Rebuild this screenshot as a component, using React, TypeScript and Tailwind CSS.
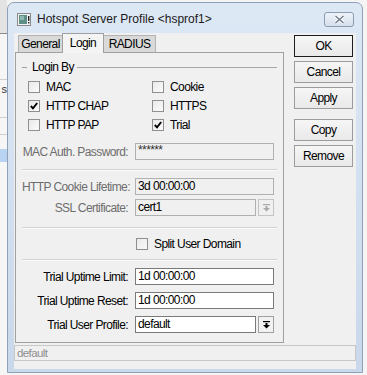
import React from "react";

function Check({ checked }: { checked?: boolean }) {
  return (
    <div className="w-[12px] h-[12px] shrink-0 border border-[#8e8f8f] bg-gradient-to-br from-[#e9e9e9] to-[#fbfbfb] flex items-center justify-center">
      {checked && (
        <svg width="8" height="8" viewBox="0 0 8 8">
          <path d="M0.8 4 L3 6.4 L7.2 1" stroke="#000" strokeWidth="1.9" fill="none" />
        </svg>
      )}
    </div>
  );
}

function Arrow({ disabled }: { disabled?: boolean }) {
  const c = disabled ? "#a9a9a9" : "#000";
  return (
    <svg width="7" height="8" viewBox="0 0 7 8">
      <rect x="0" y="0" width="7" height="1.2" fill={c} />
      <rect x="2.5" y="2" width="2" height="2" fill={c} />
      <polygon points="0,4 7,4 3.5,7.6" fill={c} />
    </svg>
  );
}

function Field({
  label,
  value,
  disabled,
  dropdown,
  small,
}: {
  label: string;
  value: string;
  disabled?: boolean;
  dropdown?: boolean;
  small?: boolean;
}) {
  return (
    <div className="flex items-center h-[17px]">
      <div
        className={
          "w-[106px] text-right whitespace-nowrap " +
          (disabled ? "text-[#6d6d6d]" : "text-black")
        }
      >
        {label}
      </div>
      <div className="ml-[7px] flex">
        <div
          className={
            "h-[17px] border pl-[2px] whitespace-nowrap overflow-hidden " +
            (dropdown ? "w-[121px] " : "w-[139px] ") +
            (disabled ? "border-[#b0b0b0] bg-[#f0f0f0] " : "border-[#7a7a7a] bg-white ") +
            (small ? "leading-[12px] text-[#333]" : "leading-[15px] text-black")
          }
        >
          {value}
        </div>
        {dropdown && (
          <div
            className={
              "ml-[2px] w-[16px] h-[17px] border flex items-center justify-center " +
              (disabled ? "border-[#c4c4c4] bg-[#f0f0f0]" : "border-[#a0a0a0] bg-[#f2f2f2]")
            }
          >
            <Arrow disabled={disabled} />
          </div>
        )}
      </div>
    </div>
  );
}

function Sep() {
  return (
    <div className="flex flex-col">
      <div className="h-[1px] bg-[#d2d2d2]" />
      <div className="h-[1px] bg-[#fbfbfb]" />
    </div>
  );
}

function Btn({ children, def }: { children: React.ReactNode; def?: boolean }) {
  return (
    <div
      className={
        "h-[22px] w-[59px] flex items-center justify-center border bg-gradient-to-b from-[#f6f6f6] to-[#e9e9e9] " +
        (def ? "border-[#1e1e1e]" : "border-[#9c9c9c]")
      }
    >
      {children}
    </div>
  );
}

function TitleIcon() {
  return (
    <svg width="14" height="13" viewBox="0 0 14 13">
      <rect x="0.5" y="0.5" width="13" height="12" fill="#f4f4f4" stroke="#8a8a8a" />
      <rect x="2" y="2" width="8" height="9" fill="#5f8f86" />
      <rect x="3" y="3" width="4" height="4" fill="#8fb8b0" />
      <rect x="11" y="3" width="1.4" height="5" fill="#222" />
      <rect x="11" y="9" width="1.4" height="1.4" fill="#222" />
    </svg>
  );
}

function LeftStrip() {
  return (
    <div className="w-[7px] shrink-0 flex flex-col overflow-hidden">
      <div className="h-[33px] shrink-0 bg-[#e3e3e3]" />
      <div className="h-[1px] shrink-0 bg-[#8a8a8a]" />
      <div className="h-[45px] shrink-0 bg-[#f6f6f6]" />
      <div className="h-[1px] shrink-0 bg-[#cfcfcf]" />
      <div className="h-[37px] shrink-0 bg-[#f6f6f6] flex justify-end pt-[2px] text-[#333] text-[11px] tracking-normal whitespace-nowrap leading-[14px]">
        s
      </div>
      <div className="h-[1px] shrink-0 bg-[#cfcfcf]" />
      <div className="h-[16px] shrink-0 bg-[#f6f6f6]" />
      <div className="h-[1px] shrink-0 bg-[#cfcfcf]" />
      <div className="h-[14px] shrink-0 bg-[#f6f6f6]" />
      <div className="h-[13px] shrink-0 bg-[#b9d3f2]" />
      <div className="flex-1 bg-[#f6f6f6]" />
    </div>
  );
}

export default function App() {
  return (
    <div className="w-[367px] h-[375px] overflow-hidden flex bg-[#f7f7f7] font-['Liberation_Sans',Arial,sans-serif] text-[12px] tracking-[-0.6px] text-black">
      <LeftStrip />
      <div className="w-[356px] shrink-0 pt-[2px] bg-[#f4f4f4]">
        <div className="w-[356px] h-[371px] rounded-t-[7px] border border-[#8fa1b8] bg-gradient-to-b from-[#dde8f5] to-[#c9d8ea] flex flex-col px-[6px] pb-[3px]">
          {/* title bar */}
          <div className="h-[30px] shrink-0 flex items-center pt-[2px]">
            <div className="ml-[3px]">
              <TitleIcon />
            </div>
            <div className="ml-[6px] text-[#1b1b1b] tracking-normal whitespace-nowrap">
              Hotspot Server Profile &lt;hsprof1&gt;
            </div>
            <div className="ml-auto mr-[2px] w-[30px] h-[15px] rounded-[3px] border border-[#8b9bb2] bg-gradient-to-b from-[#eef3f9] to-[#d5dfeb] flex items-center justify-center">
              <svg width="11" height="9" viewBox="0 0 11 9">
                <path d="M1.5 1 L9.5 8 M9.5 1 L1.5 8" stroke="#ffffff" strokeWidth="3.2" />
                <path d="M1.5 1 L9.5 8 M9.5 1 L1.5 8" stroke="#6f7c8c" strokeWidth="1.5" />
              </svg>
            </div>
          </div>
          {/* client */}
          <div className="flex-1 bg-[#f0f0f0] flex flex-col">
            <div className="flex items-start">
              <div className="ml-[1px] w-[269px] flex flex-col">
                {/* tabs */}
                <div className="h-[19px] flex items-end pl-[3px]">
                  <div className="w-[44px] h-[17px] bg-[#d9d9d9] border-t border-l border-[#b4b4b4] flex items-center justify-center">
                    General
                  </div>
                  <div className="relative z-10 -mb-[1px] w-[42px] h-[20px] bg-[#f4f4f4] border-t border-l border-r border-[#a0a0a0] flex items-center justify-center pb-[2px]">
                    Login
                  </div>
                  <div className="w-[52px] h-[17px] bg-[#d9d9d9] border-t border-r border-[#b4b4b4] flex items-center justify-center">
                    RADIUS
                  </div>
                </div>
                {/* panel */}
                <div className="h-[291px] border border-[#a0a0a0] px-[6px] flex flex-col">
                  <div className="mt-[7px] h-[14px] flex items-center">
                    <div className="w-[5px] h-[1px] bg-[#a0a0a0]" />
                    <div className="ml-[5px] whitespace-nowrap">Login By</div>
                    <div className="ml-[3px] flex-1 h-[1px] bg-[#a8a8a8]" />
                  </div>
                  <div className="mt-[3px] grid grid-cols-[124px_1fr] pl-[6px]">
                    {[
                      ["MAC", false, "Cookie", false],
                      ["HTTP CHAP", true, "HTTPS", false],
                      ["HTTP PAP", false, "Trial", true],
                    ].map(([a, ac, b, bc], i) => (
                      <React.Fragment key={i}>
                        <div className="h-[19px] flex items-center">
                          <Check checked={ac as boolean} />
                          <span className="ml-[6px] whitespace-nowrap">{a as string}</span>
                        </div>
                        <div className="h-[19px] flex items-center">
                          <Check checked={bc as boolean} />
                          <span className="ml-[6px] whitespace-nowrap">{b as string}</span>
                        </div>
                      </React.Fragment>
                    ))}
                  </div>
                  <div className="mt-[9px]">
                    <Field label="MAC Auth. Password:" value="******" disabled small />
                  </div>
                  <div className="mt-[9px]">
                    <Sep />
                  </div>
                  <div className="mt-[7px]">
                    <Field label="HTTP Cookie Lifetime:" value="3d 00:00:00" disabled />
                  </div>
                  <div className="mt-[4px]">
                    <Field label="SSL Certificate:" value="cert1" disabled dropdown />
                  </div>
                  <div className="mt-[11px]">
                    <Sep />
                  </div>
                  <div className="mt-[9px] h-[12px] flex items-center pl-[114px]">
                    <Check />
                    <span className="ml-[6px] whitespace-nowrap">Split User Domain</span>
                  </div>
                  <div className="mt-[9px]">
                    <Sep />
                  </div>
                  <div className="mt-[7px]">
                    <Field label="Trial Uptime Limit:" value="1d 00:00:00" />
                  </div>
                  <div className="mt-[7px]">
                    <Field label="Trial Uptime Reset:" value="1d 00:00:00" />
                  </div>
                  <div className="mt-[7px]">
                    <Field label="Trial User Profile:" value="default" dropdown />
                  </div>
                </div>
              </div>
              {/* buttons */}
              <div className="ml-[10px] pt-[2px] flex flex-col">
                <Btn def>OK</Btn>
                <div className="mt-[4px]">
                  <Btn>Cancel</Btn>
                </div>
                <div className="mt-[4px]">
                  <Btn>Apply</Btn>
                </div>
                <div className="mt-[10px]">
                  <Btn>Copy</Btn>
                </div>
                <div className="mt-[4px]">
                  <Btn>Remove</Btn>
                </div>
              </div>
            </div>
            {/* status bar */}
            <div className="mt-[2px] h-[16px] border border-[#c8c8c8] bg-[#f0f0f0] pl-[2px] leading-[14px] text-[#8f8f8f] text-[11.5px]">
              default
            </div>
          </div>
        </div>
      </div>
      <div className="flex-1 bg-[#f5f5f5]" />
    </div>
  );
}
